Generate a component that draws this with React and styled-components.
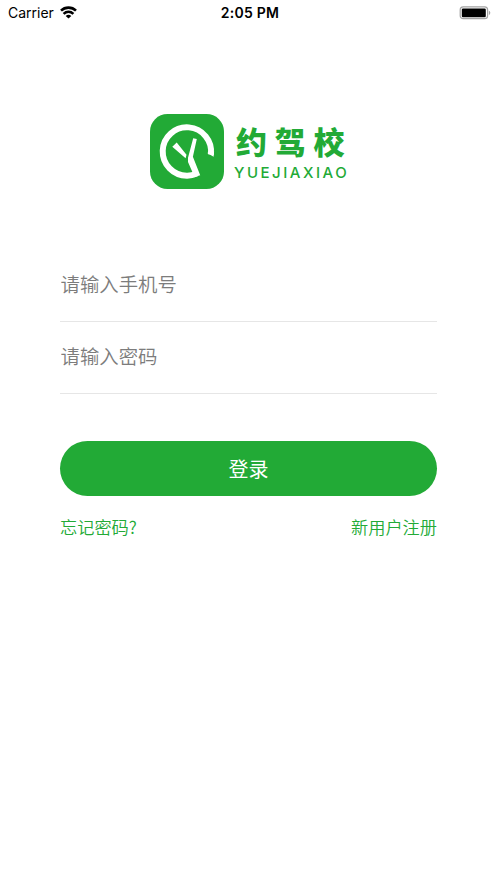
import styled, { createGlobalStyle, ThemeProvider } from "styled-components";
import { React, useState } from "react";

const theme = {
  primary: "#22aa36",
  background: "#ffffff",
  placeholder: "#7c7c7c",
  border: "#e6e6e6",
};

export default function App() {
  const [form, setForm] = useState({ phone: "", password: "" });

  const handleChange = (e) => {
    setForm({ ...form, [e.target.name]: e.target.value });
  };

  return (
    <ThemeProvider theme={theme}>
      <GlobalStyle />
      <Screen>
        <StatusBar />
        <Logo />
        <Form onSubmit={(e) => e.preventDefault()}>
          <Field
            name="phone"
            type="tel"
            placeholder="请输入手机号"
            value={form.phone}
            onChange={handleChange}
          />
          <Field
            name="password"
            type="password"
            placeholder="请输入密码"
            value={form.password}
            onChange={handleChange}
          />
          <LoginButton type="submit">登录</LoginButton>
          <Links>
            <TextLink>忘记密码?</TextLink>
            <TextLink>新用户注册</TextLink>
          </Links>
        </Form>
      </Screen>
    </ThemeProvider>
  );
}

function StatusBar() {
  return (
    <StatusWrapper>
      <Carrier>
        <span>Carrier</span>
        <svg width="17" height="13" viewBox="0 0 17 13">
          <g fill="none" stroke="#000" strokeWidth="2.6">
            <path d="M1 4.6C5.2.6 11.8.6 16 4.6" />
            <path d="M3.6 7.9C6.5 5.2 10.5 5.2 13.4 7.9" />
          </g>
          <path d="M5.7 9.9C7.4 8.5 9.6 8.5 11.3 9.9L8.5 12.6Z" />
        </svg>
      </Carrier>
      <Clock>2:05 PM</Clock>
      <Battery>
        <svg width="32" height="14" viewBox="0 0 32 14">
          <rect x="1.2" y=".9" width="27.4" height="11.8" rx="3" fill="none" stroke="#a3a3a3" strokeWidth="1.2" />
          <rect x="2.8" y="2.4" width="24" height="8.8" rx="1.3" />
          <path d="M29.9 4.7Q31.3 5.1 31.3 6.8T29.9 9Z" fill="#a3a3a3" />
        </svg>
      </Battery>
    </StatusWrapper>
  );
}

function Logo() {
  return (
    <LogoWrapper>
      <svg width="74" height="75" viewBox="0 0 74 75">
        <rect width="74" height="75" rx="17.5" fill={theme.primary} />
        <path
          d="M60.9 40.6A24.2 24.2 0 1 0 37.2 61.7Q42 61.7 46.6 59.5"
          fill="none"
          stroke="#fff"
          strokeWidth="6"
        />
        <path
          d="M57.6 39.2L63.6 42.8L64.1 37.5H58.2ZM43.2 24.2L46.8 25L42.9 42.7L50.2 61.3L44 63.2L42.6 58.4L38 48V43.8ZM22.3 32.8L26.7 28.4L36.5 40.8L35.6 44.2Z"
          fill="#fff"
        />
      </svg>
      <Wordmark>
        <BrandName>约驾校</BrandName>
        <BrandLatin>YUEJIAXIAO</BrandLatin>
      </Wordmark>
    </LogoWrapper>
  );
}

const GlobalStyle = createGlobalStyle`
  body {
    margin: 0;
    background: ${theme.background};
    font-family: Inter, "Noto Sans CJK SC", sans-serif;
  }
`;

const Screen = styled.main`
  min-height: 883px;
  box-sizing: border-box;
  background: ${({ theme }) => theme.background};
`;

const StatusWrapper = styled.header`
  height: 26px;
  padding: 0 6px 0 8px;
  display: grid;
  grid-template-columns: 1fr auto 1fr;
  align-items: center;
  font-size: 14px;
  line-height: 26px;
  color: #000;
`;

const Carrier = styled.div`
  display: flex;
  align-items: center;
  gap: 6px;

  svg {
    margin-top: -2px;
  }
`;

const Clock = styled.div`
  padding-left: 1px;
  font-weight: 600;
  letter-spacing: 0.25px;
`;

const Battery = styled.div`
  display: flex;
  justify-content: flex-end;
`;

const LogoWrapper = styled.div`
  display: flex;
  padding: 88px 0 0 150px;
  height: 75px;
`;

const Wordmark = styled.div`
  padding: 5px 0 0 10px;
  color: ${({ theme }) => theme.primary};
  white-space: nowrap;
`;

const BrandName = styled.div`
  padding-left: 2px;
  font-family: "Noto Sans CJK SC", sans-serif;
  font-size: 31px;
  font-weight: 900;
  line-height: 43px;
  letter-spacing: 7.7px;
`;

const BrandLatin = styled.div`
  font-family: Inter, sans-serif;
  font-size: 15px;
  font-weight: 500;
  line-height: 21px;
  letter-spacing: 2.5px;
`;

const Form = styled.form`
  width: 377px;
  margin: 61px 0 0 60px;
  display: flex;
  flex-direction: column;
`;

const Field = styled.input`
  height: 72px;
  box-sizing: border-box;
  padding: 0 0 4px 0.5px;
  border: none;
  border-bottom: 1px solid ${({ theme }) => theme.border};
  border-radius: 0;
  outline: none;
  background: transparent;
  color: #333;
  font-family: "Noto Sans CJK SC", sans-serif;
  font-size: 19.4px;
  font-weight: 350;

  &::placeholder {
    color: ${({ theme }) => theme.placeholder};
    opacity: 1;
  }
`;

const LoginButton = styled.button`
  height: 55px;
  margin-top: 47px;
  padding: 0;
  border: none;
  border-radius: 28px;
  background: ${({ theme }) => theme.primary};
  color: #fff;
  font-family: "Noto Sans CJK SC", sans-serif;
  font-size: 20px;
  cursor: pointer;
`;

const Links = styled.div`
  display: flex;
  justify-content: space-between;
  margin-top: 18px;
`;

const TextLink = styled.a`
  color: ${({ theme }) => theme.primary};
  font-family: "Noto Sans CJK SC", sans-serif;
  font-size: 17.2px;
  font-weight: 350;
  line-height: 25px;
  cursor: pointer;
`;
